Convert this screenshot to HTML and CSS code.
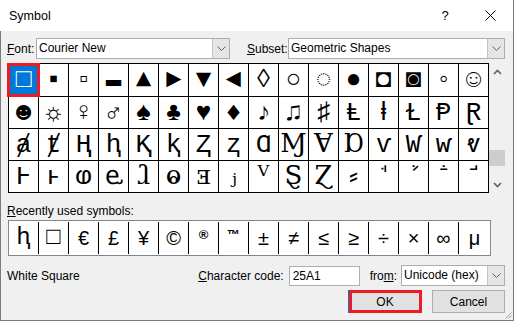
FILE: index.html
```html
<!DOCTYPE html>
<html>
<head>
<meta charset="utf-8">
<link rel="stylesheet" href="styles.css">
</head>
<body>
<div class="win">
  <div class="titlebar">
    <span class="title">Symbol</span>
    <span class="help">?</span>
    <svg class="close" width="11" height="11" viewBox="0 0 11 11"><path d="M0.5 0.5 L10.5 10.5 M10.5 0.5 L0.5 10.5" stroke="#000" stroke-width="1" fill="none"/></svg>
  </div>
  <div class="body">
    <div class="row-font">
      <span class="lbl lbl-font"><u>F</u>ont:</span>
      <div class="combo combo-font"><span class="val">Courier New</span><span class="drop"><svg width="9" height="5" viewBox="0 0 9 5"><path d="M0.5 0.5 L4.5 4.5 L8.5 0.5" stroke="#606060" fill="none"/></svg></span></div>
      <span class="lbl lbl-subset"><u>S</u>ubset:</span>
      <div class="combo combo-subset"><span class="val">Geometric Shapes</span><span class="drop"><svg width="9" height="5" viewBox="0 0 9 5"><path d="M0.5 0.5 L4.5 4.5 L8.5 0.5" stroke="#606060" fill="none"/></svg></span></div>
    </div>
    <div class="gridwrap">
      <div class="grid">
        <div class="cell sel">□</div><div class="cell">▪</div><div class="cell">▫</div><div class="cell">▬</div><div class="cell">▲</div><div class="cell">►</div><div class="cell">▼</div><div class="cell">◄</div><div class="cell">◊</div><div class="cell">○</div><div class="cell">◌</div><div class="cell">●</div><div class="cell">◘</div><div class="cell">◙</div><div class="cell">◦</div><div class="cell">☺</div>
        <div class="cell">☻</div><div class="cell">☼</div><div class="cell">♀</div><div class="cell">♂</div><div class="cell">♠</div><div class="cell">♣</div><div class="cell">♥</div><div class="cell">♦</div><div class="cell">♪</div><div class="cell">♫</div><div class="cell">♯</div><div class="cell">Ⱡ</div><div class="cell">ⱡ</div><div class="cell">Ɫ</div><div class="cell">Ᵽ</div><div class="cell">Ɽ</div>
        <div class="cell">ⱥ</div><div class="cell">ⱦ</div><div class="cell">Ⱨ</div><div class="cell">ⱨ</div><div class="cell">Ⱪ</div><div class="cell">ⱪ</div><div class="cell">Ⱬ</div><div class="cell">ⱬ</div><div class="cell">Ɑ</div><div class="cell">Ɱ</div><div class="cell">Ɐ</div><div class="cell">Ɒ</div><div class="cell">ⱱ</div><div class="cell">Ⱳ</div><div class="cell">ⱳ</div><div class="cell">ⱴ</div>
        <div class="cell">Ⱶ</div><div class="cell">ⱶ</div><div class="cell">ⱷ</div><div class="cell">ⱸ</div><div class="cell">ⱹ</div><div class="cell">ⱺ</div><div class="cell">ⱻ</div><div class="cell">ⱼ</div><div class="cell">ⱽ</div><div class="cell">Ȿ</div><div class="cell">Ɀ</div><div class="cell">⸗</div><div class="cell">ꜗ</div><div class="cell">ꜘ</div><div class="cell">ꜙ</div><div class="cell">ꜚ</div>
      </div>
      <div class="vscroll">
        <span class="arr"><svg width="9" height="6" viewBox="0 0 9 6"><path d="M1 5 L4.5 1.5 L8 5" stroke="#606060" stroke-width="1.6" fill="none"/></svg></span>
        <div class="track"><div class="thumb"></div></div>
        <span class="arr"><svg width="9" height="6" viewBox="0 0 9 6"><path d="M1 1 L4.5 4.5 L8 1" stroke="#606060" stroke-width="1.6" fill="none"/></svg></span>
      </div>
    </div>
    <div class="lbl recent-lbl"><u>R</u>ecently used symbols:</div>
    <div class="recent">
      <div class="rcell rserif">ⱨ</div><div class="rcell rserif">□</div><div class="rcell">€</div><div class="rcell">£</div><div class="rcell">¥</div><div class="rcell">©</div><div class="rcell rsmall">®</div><div class="rcell rsmall">™</div><div class="rcell">±</div><div class="rcell">≠</div><div class="rcell">≤</div><div class="rcell">≥</div><div class="rcell">÷</div><div class="rcell">×</div><div class="rcell">∞</div><div class="rcell">μ</div>
    </div>
    <div class="row-code">
      <span class="charname">White Square</span>
      <span class="lbl"><u>C</u>haracter code:</span>
      <div class="input">25A1</div>
      <span class="lbl lbl-from">fro<u>m</u>:</span>
      <div class="combo combo-from"><span class="val">Unicode (hex)</span><span class="drop"><svg width="9" height="5" viewBox="0 0 9 5"><path d="M0.5 0.5 L4.5 4.5 L8.5 0.5" stroke="#606060" fill="none"/></svg></span></div>
    </div>
    <div class="row-btns">
      <button class="btn ok">OK</button>
      <button class="btn cancel">Cancel</button>
    </div>
  </div>
  <svg class="grip" width="9" height="9" viewBox="0 0 9 9"><path d="M8.5 2.5 L2.5 8.5 M8.5 5.5 L5.5 8.5" stroke="#a0a0a0" fill="none"/></svg>
</div>
</body>
</html>
```
FILE: styles.css
```css
* { box-sizing: border-box; }
html, body { margin: 0; padding: 0; }
body {
  width: 514px;
  height: 321px;
  overflow: hidden;
  background: #f0f0f0;
  font-family: "Liberation Sans", Arial, sans-serif;
  font-size: 12px;
  color: #000;
}
.win {
  position: relative;
  width: 514px;
  height: 321px;
  border-right: 1px solid #7a7a7a;
  border-bottom: 1px solid #7a7a7a;
  display: flex;
  flex-direction: column;
}
.titlebar {
  height: 31px;
  flex: none;
  background: #fff;
  display: flex;
  align-items: center;
}
.title { flex: 1; padding-left: 9px; font-size: 12.5px; }
.help { width: 10px; text-align: center; margin-right: 35px; font-size: 13px; }
.close { margin-right: 17px; }
.body {
  flex: 1;
  border-left: 1px solid #7a7a7a;
  padding: 7px 8px 0 6px;
  display: flex;
  flex-direction: column;
}
.lbl { white-space: nowrap; }
.row-font { display: flex; align-items: center; height: 21px; }
.lbl-font { width: 29px; }
.lbl-subset { width: 41px; margin-left: 17px; }
.combo {
  display: flex;
  height: 21px;
  border: 1px solid #adadad;
  background: #fff;
}
.combo .val { flex: 1; padding-left: 2px; line-height: 19px; white-space: nowrap; overflow: hidden; }
.combo .drop {
  width: 17px;
  background: #e5e5e5;
  border-left: 1px solid #c4c4c4;
  display: flex;
  align-items: center;
  justify-content: center;
}
.combo-font { width: 194px; }
.combo-subset { flex: 1; }
.combo-from { width: 104px; }

.gridwrap { display: flex; margin-top: 4px; margin-left: 1px; height: 130px; }
.grid {
  display: grid;
  grid-template-columns: repeat(16, 30px);
  grid-template-rows: 33px repeat(3, 32px);
  border-top: 1px solid #000;
  border-left: 1px solid #000;
  background: #fff;
  width: 481px;
}
.cell {
  border-right: 1px solid #000;
  border-bottom: 1px solid #000;
  display: flex;
  align-items: center;
  justify-content: center;
  font-family: "Liberation Mono", "DejaVu Serif", "DejaVu Sans", serif;
  font-size: 26px;
  line-height: 1;
  overflow: hidden;
}
.cell.sel { position: relative; background: #0078d7; color: #fff; overflow: visible; }
.cell.sel::after {
  content: "";
  position: absolute;
  top: -1px; left: -2px; right: -2px; bottom: -1px;
  border: 3px solid #ed1c24;
  z-index: 2;
}
.vscroll { width: 16px; display: flex; flex-direction: column; }
.arr { height: 17px; display: flex; align-items: center; justify-content: center; }
.track { flex: 1; }
.thumb { margin-top: 70px; height: 16px; background: #cdcdcd; }

.recent-lbl { margin-top: 11px; height: 14px; line-height: 14px; }
.recent {
  margin-top: 2px;
  margin-left: 1px;
  width: 483px;
  height: 36px;
  border: 1px solid #828790;
  background: #fff;
  display: flex;
  align-items: center;
}
.rcell {
  width: 30px;
  height: 32px;
  border-right: 1px solid #000;
  display: flex;
  align-items: center;
  justify-content: center;
  font-size: 20px;
  line-height: 1;
}
.rcell:last-child { border-right: none; flex: 1; }
.rserif { font-family: "Liberation Mono", "DejaVu Serif", serif; font-size: 24px; }
.rsmall { font-size: 13px; font-weight: bold; align-items: flex-start; padding-top: 6px; }

.row-code { display: flex; align-items: center; margin-top: 9px; height: 21px; }
.charname { flex: 1; }
.input {
  margin-left: 5px;
  width: 71px;
  height: 20px;
  border: 1px solid #adadad;
  background: #fff;
  padding-left: 3px;
  line-height: 18px;
}
.lbl-from { margin-left: 10px; margin-right: 4px; }

.row-btns { display: flex; justify-content: flex-end; gap: 10px; margin-top: 4px; }
.btn {
  height: 23px;
  background: #e1e1e1;
  border: 1px solid #adadad;
  font-family: "Liberation Sans", Arial, sans-serif;
  font-size: 12px;
  color: #000;
  padding: 0;
}
.ok { width: 74px; position: relative; border-color: #0078d7; }
.ok::after {
  content: "";
  position: absolute;
  top: -1px; left: 0; right: -1px; bottom: -1px;
  border: 3px solid #ed1c24;
}
.cancel { width: 73px; }
.grip { position: absolute; right: 1px; bottom: 1px; }
```
